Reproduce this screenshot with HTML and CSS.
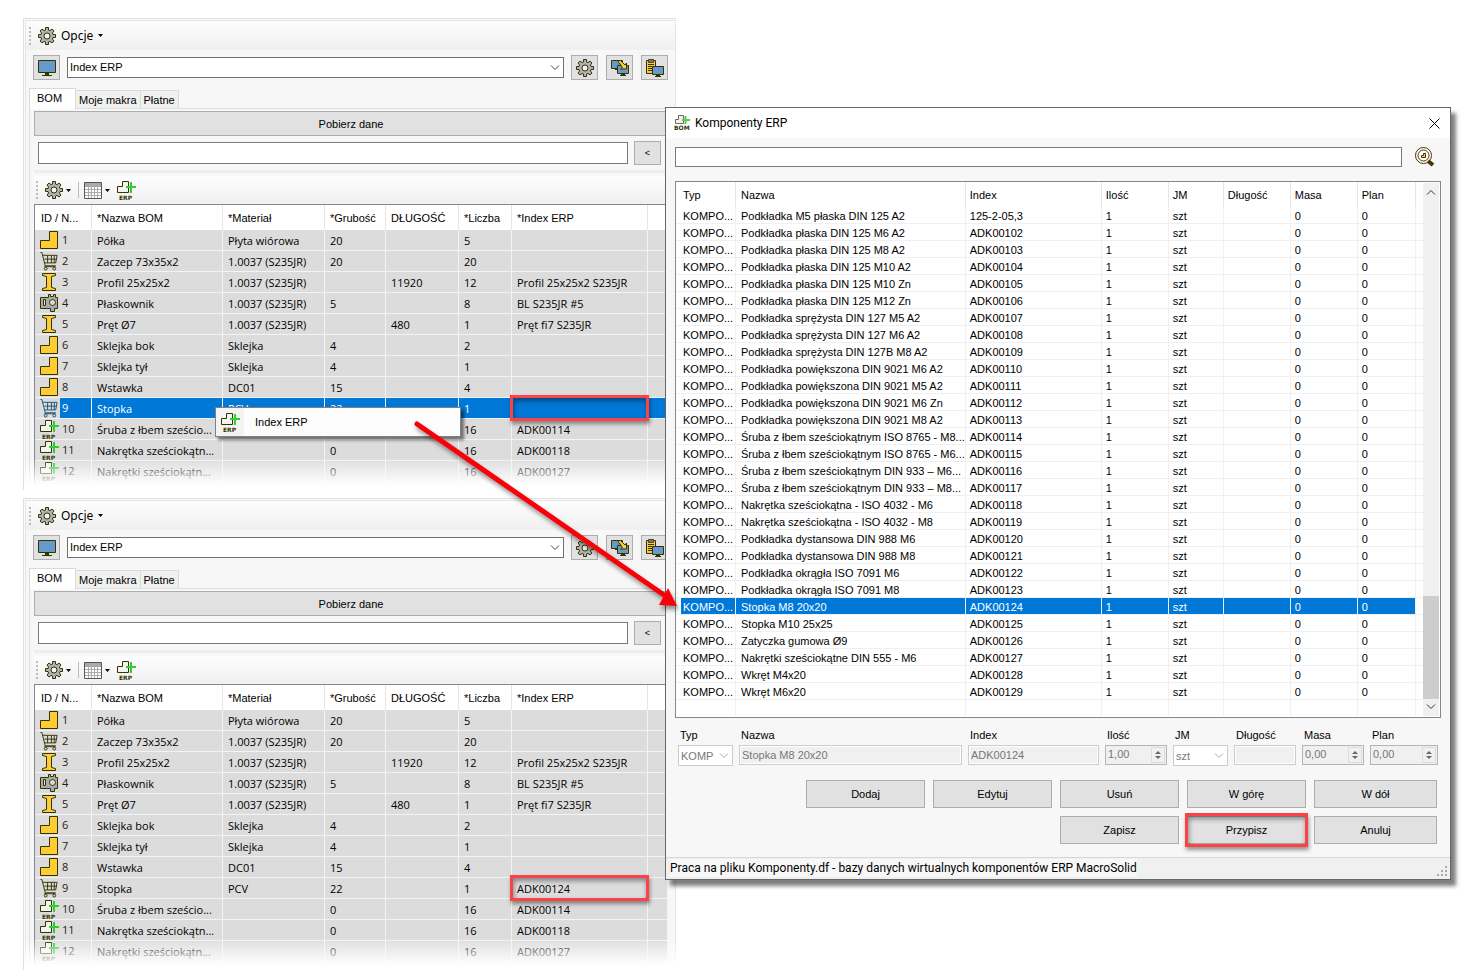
FILE: index.html
```html
<!DOCTYPE html>
<html lang="pl">
<head>
<meta charset="utf-8">
<title>Komponenty ERP</title>
<link rel="stylesheet" href="styles.css">
</head>
<body>
<svg class="sprite" aria-hidden="true">
  <symbol id="gear" viewBox="0 0 18 18">
    <path d="M7.5.5h3V3l1.5.6L14 2l2 2-1.6 2 .6 1.5h2.5v3H15l-.6 1.5L16 14l-2 2-2-1.6-1.5.6v2.5h-3V15L6 14.4 4 16l-2-2 1.600-2L3 10.500H.5v-3H3L3.600 6 2 4l2-2 2 1.600L7.500 3z" fill="#b0b0b0" stroke="#333300"/>
    <circle cx="9" cy="9" r="3" fill="#f4f4f4" stroke="#333300"/>
  </symbol>
  <symbol id="monitor" viewBox="0 0 18 16">
    <path d="M.5.5h17v12H.5z" fill="#6699cc" stroke="#333300"/>
    <path d="M7 13h4v2h3v1H4v-1h3z" fill="#333300"/>
  </symbol>
  <symbol id="transfer" viewBox="0 0 18 17">
    <path d="M.5 1.500h11v8H.5z" fill="#6699cc" stroke="#333300"/>
    <path d="M4 10h3v1H4z" fill="#333300"/>
    <path d="M6.500 6.500h11v8h-11z" fill="#6699cc" stroke="#333300"/>
    <path d="M10 15h4v1h1v1H9v-1h1z" fill="#333300"/>
    <path d="M6.500 1.500h3l4.500 4.500 1.500-2v6h-6l2-1.500z" fill="#ffcc33" stroke="#333300"/>
  </symbol>
  <symbol id="paste" viewBox="0 0 18 18">
    <path d="M.5 1.500h9v13h-9z" fill="#ffcc33" stroke="#333300"/>
    <path d="M2.500.500h5v3h-5z" fill="#777" stroke="#444"/>
    <path d="M2 5.500h6M2 7.500h4M2 9.500h4M2 11.500h4" stroke="#333300" fill="none"/>
    <path d="M6.500 7.500h11v8h-11z" fill="#6699cc" stroke="#333300"/>
    <path d="M10 16h4v1h1v1H9v-1h1z" fill="#333300"/>
  </symbol>
  <symbol id="grid" viewBox="0 0 18 17">
    <path d="M.5.5h17v16H.5z" fill="#fff" stroke="#555"/>
    <path d="M1 1h16v3H1z" fill="#aaa"/>
    <path d="M1 4.500h16M1 7.500h16M1 10.500h16M1 13.500h16M4.500 4v12M7.500 4v12M10.500 4v12M13.500 4v12" stroke="#aaa" fill="none"/>
    <path d="M1 .500h16" stroke="#555"/>
  </symbol>
  <symbol id="erp" viewBox="0 0 19 19">
    <path d="M.5 5.500h5v-5h6v11H.5z" fill="#f4f4ee" stroke="#333300"/>
    <path d="M14 1v11M9 6h10" stroke="#33cc33" stroke-width="2"/>
    <text x="2" y="19" class="tiny">ERP</text>
  </symbol>
  <symbol id="bom" viewBox="0 0 16 16">
    <path d="M1.500 4.500h3v-4h5v8h-8z" fill="#f4f0ee" stroke="#776655"/>
    <path d="M11.500 1v8M8 5h8" stroke="#55cc55" stroke-width="2"/>
    <text x="0" y="15" class="tiny">BOM</text>
  </symbol>
  <symbol id="part" viewBox="0 0 19 19">
    <path d="M.5 17.500v-8h9v-9h8v17z" fill="#ffcc33" stroke="#333300"/>
  </symbol>
  <symbol id="cart" viewBox="0 0 19 20">
    <path d="M0 .5h1.500l3.500 14h11M2.500 3.500h15l-1.500 8H4.500M4 7.500h13M7.500 3.500v8M11.500 3.500v8M14.500 3.500v8M4 15.500h12" fill="none" stroke="currentColor"/>
    <circle cx="5.500" cy="17.500" r="1.500" fill="none" stroke="currentColor"/>
    <circle cx="14.500" cy="17.500" r="1.500" fill="none" stroke="currentColor"/>
  </symbol>
  <symbol id="beam" viewBox="0 0 19 19">
    <path d="M2.500.500h13v2l-4 1v11l4 1v2h-13v-2l4-1v-11l-4-1z" fill="#ffcc33" stroke="#333300"/>
  </symbol>
  <symbol id="sheet" viewBox="0 0 19 19">
    <path d="M.5 3.500h8v-3h2v2h3v-2h2v3h2v11h-3v3h-4v-3h-10z" fill="#aaa" stroke="#333300"/>
    <path d="M3.500 5.500h2v6h-2z" fill="#ddd" stroke="#333300"/>
    <circle cx="12.500" cy="8.500" r="3" fill="#ddd" stroke="#333300"/>
  </symbol>
  <symbol id="lens" viewBox="0 0 20 20">
    <circle cx="8.500" cy="8.500" r="8" fill="#fff" stroke="#4d3300"/>
    <circle cx="8.500" cy="8.500" r="5.500" fill="#fff" stroke="#4d3300"/>
    <path d="M6.500 10.500v-2h2v-2h2v4z" fill="#ffcc33" stroke="#4d3300"/>
    <path d="M13 14l5 4" stroke="#4d3300" stroke-width="4"/>
  </symbol>
  <symbol id="chevron" viewBox="0 0 10 6">
    <path d="M1 .5l4 4 4-4" fill="none" stroke="currentColor"/>
  </symbol>
  <symbol id="caret" viewBox="0 0 5 3"><path d="M0 0h5L2.500 3z"/></symbol>
</svg>

<template id="panel-template">
  <section class="panel">
    <div class="panel-inner">
      <div class="toolbar toolbar-main">
        <i class="grip"></i>
        <button class="tool options"><svg width="18" height="18"><use href="#gear"/></svg>Opcje<svg width="5" height="3"><use href="#caret"/></svg></button>
      </div>
      <div class="command-row">
        <button class="square" aria-label="Ekran"><svg width="18" height="16"><use href="#monitor"/></svg></button>
        <div class="combo">
          <select aria-label="Makro"><option>Index ERP</option></select>
          <svg class="chevron" width="10" height="6"><use href="#chevron"/></svg>
        </div>
        <div class="button-group">
          <button class="square" aria-label="Ustawienia"><svg width="18" height="18"><use href="#gear"/></svg></button>
          <button class="square" aria-label="Przenieś"><svg width="18" height="17"><use href="#transfer"/></svg></button>
          <button class="square" aria-label="Wklej"><svg width="18" height="18"><use href="#paste"/></svg></button>
        </div>
      </div>
      <div class="tabs" role="tablist">
        <button class="tab active" role="tab">BOM</button>
        <button class="tab" role="tab">Moje makra</button>
        <button class="tab" role="tab">Płatne</button>
      </div>
      <div class="tab-page">
        <button class="button fetch">Pobierz dane</button>
        <div class="filter-row">
          <input type="text" aria-label="Filtr">
          <button class="button">&lt;</button>
        </div>
        <div class="splitter"></div>
        <div class="toolbar toolbar-table">
          <i class="grip"></i>
          <button class="tool" aria-label="Opcje tabeli"><svg width="18" height="18"><use href="#gear"/></svg><svg width="5" height="3"><use href="#caret"/></svg></button>
          <i class="separator"></i>
          <button class="tool" aria-label="Kolumny"><svg width="18" height="17"><use href="#grid"/></svg><svg width="5" height="3"><use href="#caret"/></svg></button>
          <button class="tool" aria-label="ERP"><svg width="19" height="19"><use href="#erp"/></svg></button>
        </div>
        <table class="bom">
          <colgroup><col class="w57"><col class="w131"><col class="w102"><col class="w61"><col class="w73"><col class="w53"><col class="w136"><col></colgroup>
          <thead><tr><th>ID / N...</th><th>*Nazwa BOM</th><th>*Materiał</th><th>*Grubość</th><th>DŁUGOŚĆ</th><th>*Liczba</th><th>*Index ERP</th><th></th></tr></thead>
          <tbody></tbody>
        </table>
      </div>
    </div>
  </section>
</template>

<main class="stage">
  <div class="panels" id="panels"></div>

  <section class="dialog" role="dialog" aria-label="Komponenty ERP">
    <header class="titlebar">
      <svg width="16" height="16"><use href="#bom"/></svg>
      <h1>Komponenty ERP</h1>
      <button class="close" aria-label="Zamknij"><svg width="11" height="11" viewBox="0 0 11 11"><path d="M.5.500l10 10M10.500.500l-10 10" stroke="#000" fill="none"/></svg></button>
    </header>
    <div class="dialog-body">
      <div class="search-row">
        <input type="text" aria-label="Szukaj">
        <button class="search" aria-label="Szukaj"><svg width="20" height="20"><use href="#lens"/></svg></button>
      </div>
      <div class="list">
        <table class="components">
          <colgroup><col class="w60"><col class="w227"><col class="w136"><col class="w67"><col class="w55"><col class="w67"><col class="w67"><col class="w58"><col></colgroup>
          <thead><tr><th>Typ</th><th>Nazwa</th><th>Index</th><th>Ilość</th><th>JM</th><th>Długość</th><th>Masa</th><th>Plan</th><th></th></tr></thead>
          <tbody id="components"></tbody>
        </table>
        <div class="scrollbar">
          <svg width="10" height="6" class="flip"><use href="#chevron"/></svg>
          <i class="thumb"></i>
          <svg width="10" height="6"><use href="#chevron"/></svg>
        </div>
      </div>
      <div class="form">
        <div class="field"><label for="typ">Typ</label><div class="combo disabled"><select id="typ" disabled><option>KOMPONENT</option></select><svg class="chevron" width="10" height="6"><use href="#chevron"/></svg></div></div>
        <div class="field"><label for="nazwa">Nazwa</label><input id="nazwa" type="text" value="Stopka M8 20x20" disabled></div>
        <div class="field"><label for="index">Index</label><input id="index" type="text" value="ADK00124" disabled></div>
        <div class="field"><label for="ilosc">Ilość</label><div class="spin"><input id="ilosc" type="text" value="1,00" disabled><i class="arrows"></i></div></div>
        <div class="field"><label for="jm">JM</label><div class="combo disabled"><select id="jm" disabled><option>szt</option></select><svg class="chevron" width="10" height="6"><use href="#chevron"/></svg></div></div>
        <div class="field"><label for="dlugosc">Długość</label><input id="dlugosc" type="text" disabled></div>
        <div class="field"><label for="masa">Masa</label><div class="spin"><input id="masa" type="text" value="0,00" disabled><i class="arrows"></i></div></div>
        <div class="field"><label for="plan">Plan</label><div class="spin"><input id="plan" type="text" value="0,00" disabled><i class="arrows"></i></div></div>
      </div>
      <div class="actions">
        <button class="button">Dodaj</button>
        <button class="button">Edytuj</button>
        <button class="button">Usuń</button>
        <button class="button">W górę</button>
        <button class="button">W dół</button>
        <button class="button third">Zapisz</button>
        <button class="button marked">Przypisz</button>
        <button class="button">Anuluj</button>
      </div>
    </div>
    <footer class="statusbar">
      <span>Praca na pliku Komponenty.df - bazy danych wirtualnych komponentów ERP MacroSolid</span>
      <svg width="11" height="11" viewBox="0 0 11 11" fill="#aaa"><path d="M8 0h2v2H8zM4 4h2v2H4zM8 4h2v2H8zM0 8h2v2H0zM4 8h2v2H4zM8 8h2v2H8z"/></svg>
    </footer>
  </section>

  <div class="context-menu" role="menu">
    <svg width="19" height="19"><use href="#erp"/></svg>
    <button role="menuitem">Index ERP</button>
  </div>

  <svg class="arrow" width="270" height="200" viewBox="0 0 270 200" aria-hidden="true">
    <path d="M7 7L254 178" stroke="#fa0008" stroke-width="5" stroke-linecap="round"/>
    <path d="M267 189l-18-1 9-17z" fill="#fa0008"/>
  </svg>
</main>
<script src="script.js"></script>
</body>
</html>
```
FILE: styles.css
```css
* { box-sizing: border-box; }

body {
  margin: 0;
  background: #fff;
  color: #000;
  font: 11px/14px "Liberation Sans", Arial, sans-serif;
}

button, input, select {
  margin: 0;
  padding: 0;
  border: 0;
  border-radius: 0;
  background: none;
  color: inherit;
  font: inherit;
}

svg { display: block; flex: none; }
.sprite { display: none; }
.tiny { font: bold 6px "DejaVu Sans", sans-serif; fill: #333300; }

.stage {
  position: relative;
  display: grid;
  grid-template-columns: minmax(0, 642fr) minmax(0, 786fr);
  align-items: start;
  padding: 18px 24px 0 23px;
}

/* Panels */
.panels { display: grid; gap: 8px; margin-right: -11px; }
.panel {
  position: relative;
  height: 472px;
  overflow: hidden;
  padding: 1px 0 0 1px;
  border: solid #e0e0e0;
  border-width: 1px 0 0 1px;
  background: #fafafa;
}
.panel::after {
  content: "";
  position: absolute;
  inset: auto 0 0 0;
  height: 32px;
  background: linear-gradient(rgba(255, 255, 255, 0), #fff 85%);
}
.panel-inner { border: 1px solid #e6e6e6; background: #f7f7f7; }

.toolbar { display: flex; align-items: center; background: linear-gradient(#fdfdfd, #f0f0f0); }
.toolbar-main { height: 29px; padding-left: 3px; }
.toolbar-table { height: 28px; padding-left: 2px; }
.grip {
  width: 2px;
  height: 18px;
  margin-right: 7px;
  background: repeating-linear-gradient(#bbb 0 2px, transparent 2px 4px);
}
.separator { width: 1px; height: 16px; margin-right: 5px; background: #bbb; }
.tool { display: flex; align-items: center; gap: 3px; margin-right: 7px; }
.options { gap: 5px; font: 12px/16px "Noto Sans", sans-serif; }

.command-row { display: flex; align-items: center; gap: 7px; padding: 5px 7px 0; }
.button-group { display: flex; gap: 8px; }
.square {
  display: grid;
  place-items: center;
  width: 27px;
  height: 25px;
  border: 1px solid #adadad;
  background: #e1e1e1;
}
.combo { position: relative; flex: 1; height: 21px; }
.combo select {
  width: 100%;
  height: 100%;
  padding: 0 0 2px 2px;
  border: 1px solid #707070;
  background: #fff;
  appearance: none;
}
.chevron { position: absolute; right: 4px; top: 8px; color: #444; pointer-events: none; }

.tabs { display: flex; align-items: flex-end; height: 20px; margin: 8px 0 0 3px; }
.tab { height: 18px; padding: 0 3px; border: solid #d9d9d9; border-width: 1px 1px 0 0; background: #f0f0f0; }
.tab.active { height: 21px; padding: 0 13px 2px 7px; border-left-width: 1px; background: #fff; margin-bottom: -1px; z-index: 1; }
.tab-page { margin-left: 3px; padding: 2px 7px 0 4px; border: solid #dcdcdc; border-width: 1px 0 0 1px; }

.button { border: 1px solid #adadad; background: #e1e1e1; }
.fetch { display: block; width: 100%; height: 25px; }
.filter-row { display: flex; align-items: center; gap: 6px; height: 34px; padding: 0 7px 0 4px; }
.filter-row input { flex: 1; min-width: 0; height: 22px; border: 1px solid #7a7a7a; background: #fff; }
.filter-row .button { width: 27px; height: 24px; font-size: 9px; }
.splitter { height: 3px; margin-bottom: 3px; background: #eee; }

/* Tables */
table { border-collapse: separate; border-spacing: 0; table-layout: fixed; width: 100%; }
th, td { padding: 0 0 0 5px; text-align: left; font-weight: normal; white-space: nowrap; overflow: hidden; }
.w53 { width: 53px; } .w55 { width: 55px; } .w57 { width: 57px; } .w58 { width: 58px; } .w60 { width: 60px; }
.w61 { width: 61px; } .w67 { width: 67px; } .w73 { width: 73px; } .w102 { width: 102px; }
.w131 { width: 131px; } .w136 { width: 136px; } .w227 { width: 227px; }

.bom { border: solid #828790; border-width: 1px 0 0 1px; }
.bom th { height: 25px; border-right: 1px solid #e5e5e5; background: #fff; }
.bom td {
  height: 21px;
  padding-top: 2px;
  border: solid #f3f3f3;
  border-width: 0 1px 1px 0;
  background: #dcdcdc;
  font: 11px/16px "Open Sans", sans-serif;
}
.bom th:first-child { padding-left: 6px; }
.bom td:first-child { padding-top: 0; }
.bom .selected td { background: #0078d7; color: #fff; }
.bom .selected td:first-child { background: linear-gradient(90deg, #dcdcdc 25px, #0078d7 25px); }
.id { display: flex; align-items: center; gap: 3px; height: 20px; color: #222; }
.id svg { color: #333300; }
.selected .id { color: #fff; }
.selected .id svg { color: #1a5273; }

.marked { position: relative; overflow: visible; }
.marked::after {
  content: "";
  position: absolute;
  inset: -3px -2px;
  border: 3px solid #fb4246;
  box-shadow: 1px 3px 4px rgba(0, 0, 0, .4), inset 1px 3px 5px rgba(0, 0, 0, .4);
}
.button.marked::after { inset: -4px -3px; }

/* Dialog */
.dialog {
  position: relative;
  z-index: 1;
  margin-top: 89px;
  border: 1px solid #666;
  background: #f7f7f7;
  box-shadow: 5px 6px 4px rgba(0, 0, 0, .5);
}
.titlebar { display: flex; align-items: center; gap: 5px; height: 30px; padding: 0 10px 0 8px; background: #fff; }
.titlebar h1 { flex: 1; margin: 0; font: 12px/16px Roboto, sans-serif; }
.dialog-body { padding: 9px 9px 13px; }
.search-row { display: flex; align-items: center; gap: 13px; padding-right: 6px; }
.search-row input { flex: 1; min-width: 0; height: 20px; border: 1px solid #7a7a7a; background: #fff; }
.list { display: flex; height: 537px; margin-top: 14px; border: 1px solid #828790; background: #fff; }
.components { flex: 1; width: auto; height: 534px; }
.components th { height: 25px; padding-left: 4px; border-right: 1px solid #e5e5e5; }
.components td { height: 17px; padding: 2px 0 0 4px; line-height: 14px; border: solid #f0f0f0; border-width: 0 1px 1px 0; }
.components th:first-child, .components td:first-child { padding-left: 7px; }
.components th:nth-child(2), .components td:nth-child(2) { padding-left: 5px; }
.components th:last-child, .components td:last-child { border-right: 0; }
.components .filler td { height: auto; border-bottom: 0; }
.components .selected td { background: #0078d7; color: #fff; }
.components .selected td:first-child { background: linear-gradient(90deg, #fff 5px, #0078d7 5px); }
.components .selected td:last-child { background: #fff; }
.scrollbar {
  display: flex;
  flex-direction: column;
  align-items: center;
  width: 16px;
  margin: 1px 1px 1px 0;
  padding: 6px 0;
  background: #f0f0f0;
  color: #333;
}
.flip { transform: rotate(180deg); }
.thumb { width: 100%; height: 103px; margin: auto 0 5px; background: #cdcdcd; }

.form {
  display: grid;
  grid-template-columns: 55fr 223fr 131fr 62fr 55fr 62fr 62fr 68fr;
  gap: 6px;
  margin: 10px 3px 0;
}
.field { min-width: 0; }
.field label { display: block; height: 17px; padding-left: 2px; }
.field input { display: block; width: 100%; height: 20px; padding: 0 2px; border: 1px solid #ccc; background: #f0f0f0; color: #777; box-shadow: inset 0 0 0 1px #fff; }
.combo.disabled select { padding: 0 18px 0 2px; border-color: #ccc; color: #777; opacity: 1; }
.combo.disabled .chevron { color: #aaa; }
.spin { position: relative; }
.field .spin input { padding-bottom: 2px; border-color: #b5b5b5; box-shadow: none; }
.arrows { position: absolute; right: 2px; top: 2px; width: 14px; height: 16px; border: 1px solid #dcdcdc; }
.arrows::before, .arrows::after { content: ""; position: absolute; left: 3px; border: solid transparent; border-width: 0 3px; }
.arrows::before { top: 3px; border-bottom: 3px solid #666; }
.arrows::after { bottom: 3px; border-top: 3px solid #666; }

.actions {
  display: grid;
  grid-template-columns: repeat(4, 119fr) 123fr;
  gap: 8px;
  margin: 14px 4px 0 131px;
}
.actions .button { height: 28px; }
.actions .third { grid-column: 3; }
.statusbar { display: flex; justify-content: space-between; align-items: flex-end; height: 22px; padding: 0 2px 2px 4px; border-top: 1px solid #d7d7d7; background: #f0f0f0; }
.statusbar span { background: #f7f7f7; font: 12px/18px Roboto, sans-serif; white-space: nowrap; }

/* Overlays */
.context-menu {
  position: absolute;
  z-index: 1;
  left: 215px;
  top: 407px;
  display: flex;
  align-items: center;
  gap: 15px;
  width: 246px;
  height: 30px;
  padding-left: 5px;
  border: 1px solid #808080;
  background: linear-gradient(90deg, #f3f3f3 28px, #fcfcfc 28px);
  box-shadow: 3px 3px 3px rgba(0, 0, 0, .5);
}
.arrow {
  position: absolute;
  z-index: 2;
  left: 410px;
  top: 417px;
  filter: drop-shadow(2px 4px 2px rgba(0, 0, 0, .4));
  pointer-events: none;
}
```
FILE: script.js
```js
const bomRows = [
  ["part", 1, "Półka", "Płyta wiórowa", "20", "", "5", ""],
  ["cart", 2, "Zaczep 73x35x2", "1.0037 (S235JR)", "20", "", "20", ""],
  ["beam", 3, "Profil 25x25x2", "1.0037 (S235JR)", "", "11920", "12", "Profil 25x25x2 S235JR"],
  ["sheet", 4, "Płaskownik", "1.0037 (S235JR)", "5", "", "8", "BL S235JR #5"],
  ["beam", 5, "Pręt Ø7", "1.0037 (S235JR)", "", "480", "1", "Pręt fi7 S235JR"],
  ["part", 6, "Sklejka bok", "Sklejka", "4", "", "2", ""],
  ["part", 7, "Sklejka tył", "Sklejka", "4", "", "1", ""],
  ["part", 8, "Wstawka", "DC01", "15", "", "4", ""],
  ["cart", 9, "Stopka", "PCV", "22", "", "1", "ADK00124"],
  ["erp", 10, "Śruba z łbem sześcio...", "", "0", "", "16", "ADK00114"],
  ["erp", 11, "Nakrętka sześciokątn...", "", "0", "", "16", "ADK00118"],
  ["erp", 12, "Nakrętki sześciokątn...", "", "0", "", "16", "ADK00127"]
];

const componentNames = [
  "Podkładka M5 płaska DIN 125 A2", "Podkładka płaska DIN 125 M6 A2", "Podkładka płaska DIN 125 M8 A2",
  "Podkładka płaska DIN 125 M10 A2", "Podkładka płaska DIN 125 M10 Zn", "Podkładka płaska DIN 125 M12 Zn",
  "Podkładka sprężysta DIN 127 M5 A2", "Podkładka sprężysta DIN 127 M6 A2", "Podkładka sprężysta DIN 127B M8 A2",
  "Podkładka powiększona DIN 9021 M6 A2", "Podkładka powiększona DIN 9021 M5 A2", "Podkładka powiększona DIN 9021 M6 Zn",
  "Podkładka powiększona DIN 9021 M8 A2", "Śruba z łbem sześciokątnym ISO 8765 - M8...", "Śruba z łbem sześciokątnym ISO 8765 - M6...",
  "Śruba z łbem sześciokątnym DIN 933 – M6...", "Śruba z łbem sześciokątnym DIN 933 – M8...", "Nakrętka sześciokątna - ISO 4032 - M6",
  "Nakrętka sześciokątna - ISO 4032 - M8", "Podkładka dystansowa DIN 988 M6", "Podkładka dystansowa DIN 988 M8",
  "Podkładka okrągła ISO 7091 M6", "Podkładka okrągła ISO 7091 M8", "Stopka M8 20x20", "Stopka M10 25x25",
  "Zatyczka gumowa Ø9", "Nakrętki sześciokątne DIN 555 - M6", "Wkręt M4x20", "Wkręt M6x20"
];

const cells = values => values.map(value => `<td>${value}</td>`).join("");

function addPanel(assigned) {
  const panel = document.getElementById("panel-template").content.cloneNode(true);
  panel.querySelector("tbody").innerHTML = bomRows.map(([icon, id, ...rest]) => {
    const isTarget = id === 9;
    const index = isTarget && !assigned ? "" : rest[5];
    return `<tr class="${isTarget && !assigned ? "selected" : ""}">
      <td><div class="id"><svg width="19" height="19"><use href="#${icon}"/></svg>${id}</div></td>
      ${cells(rest.slice(0, 5))}<td class="${isTarget ? "marked" : ""}">${index}</td><td></td></tr>`;
  }).join("") + `<tr>${cells(Array(8).fill(""))}</tr>`;
  document.getElementById("panels").append(panel);
}

addPanel(false);
addPanel(true);

document.getElementById("components").innerHTML = componentNames.map((name, i) => {
  const index = i === 0 ? "125-2-05,3" : `ADK00${101 + i}`;
  return `<tr class="${i === 23 ? "selected" : ""}">${cells(["KOMPO...", name, index, "1", "szt", "", "0", "0", ""])}</tr>`;
}).join("") + `<tr class="filler">${cells(Array(9).fill(""))}</tr>`;
```
